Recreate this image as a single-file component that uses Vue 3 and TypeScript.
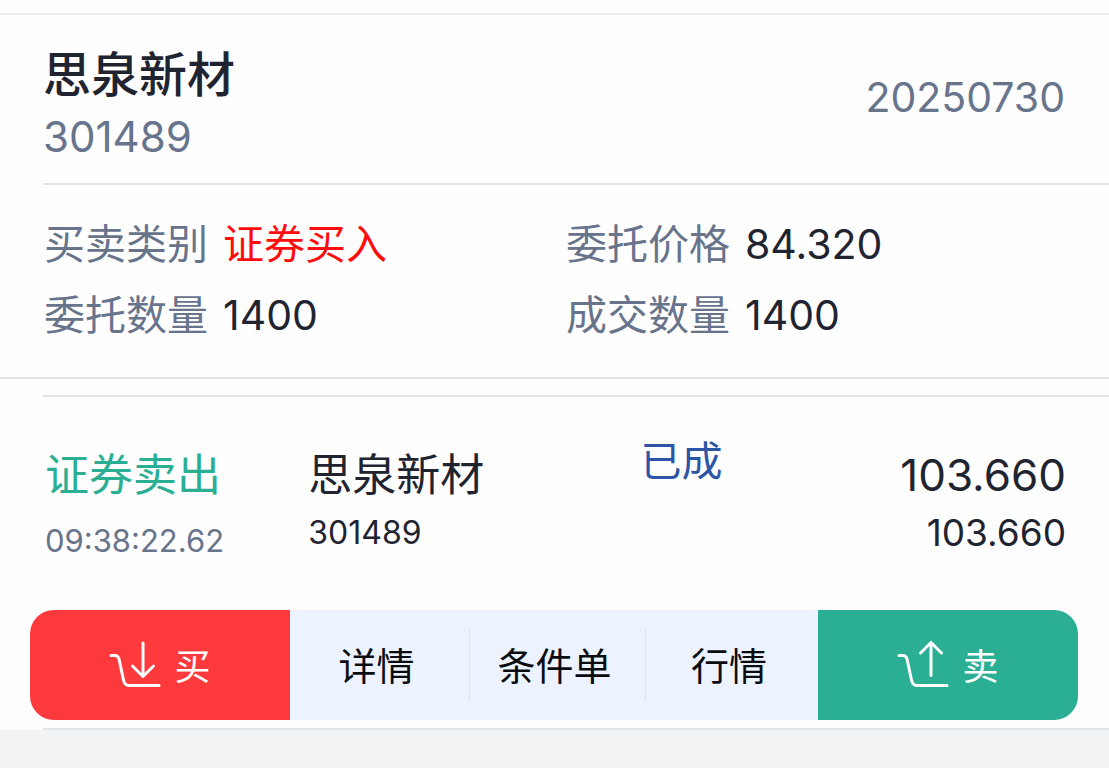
<script setup lang="ts">
interface Field {
  label: string
  value: string
  kind?: 'buy'
}

const fields: Field[] = [
  { label: '买卖类别', value: '证券买入', kind: 'buy' },
  { label: '委托价格', value: '84.320' },
  { label: '委托数量', value: '1400' },
  { label: '成交数量', value: '1400' },
]

const links: string[] = ['详情', '条件单', '行情']
</script>

<template>
  <main class="page">
    <section class="order">
      <header class="order-head">
        <div>
          <h1 class="stock-name">思泉新材</h1>
          <p class="stock-code">301489</p>
        </div>
        <time class="order-date" datetime="2025-07-30">20250730</time>
      </header>
      <dl class="fields">
        <div v-for="field in fields" :key="field.label" class="field">
          <dt>{{ field.label }}</dt>
          <dd :class="field.kind">{{ field.value }}</dd>
        </div>
      </dl>
    </section>

    <section class="deal">
      <div class="deal-row">
        <div class="cell">
          <div class="main-line sell-text">证券卖出</div>
          <div class="time">09:38:22.62</div>
        </div>
        <div class="cell">
          <div class="main-line">思泉新材</div>
          <div class="code">301489</div>
        </div>
        <div class="status">已成</div>
        <div class="cell prices">
          <div class="main-line">103.660</div>
          <div class="sub-price">103.660</div>
        </div>
      </div>

      <nav class="actions">
        <button type="button" class="trade buy-button">
          <svg class="icon" viewBox="0 0 52 48" aria-hidden="true">
            <path d="M2 14.500H6Q9 14.500 10 18L14.500 39Q15.500 44.500 20 44.500H50" />
            <path d="M34 2V35M23.500 25L34 35.500L44.500 25" />
          </svg>
          <span class="trade-label">买</span>
        </button>
        <div class="links">
          <button v-for="link in links" :key="link" type="button" class="link">{{ link }}</button>
        </div>
        <button type="button" class="trade sell-button">
          <svg class="icon" viewBox="0 0 52 48" aria-hidden="true">
            <path d="M2 14.500H6Q9 14.500 10 18L14.500 39Q15.500 44.500 20 44.500H50" />
            <path d="M34 34.500V2M23.500 12L34 1.500L44.500 12" />
          </svg>
          <span class="trade-label">卖</span>
        </button>
      </nav>
      <div class="end-line"></div>
    </section>
  </main>
</template>

<style>
body {
  margin: 0;
  background: #f2f3f5;
}
</style>

<style scoped>
.page {
  padding-top: 13px;
  background: #fefefe;
  color: #1f2430;
  font-family: Inter, "Noto Sans CJK SC", sans-serif;
  white-space: nowrap;
}

h1,
p,
dl,
dd {
  margin: 0;
}

.order {
  border-top: 2px solid #eeeeee;
  border-bottom: 2px solid #e5e5e5;
}

.order-head {
  display: flex;
  justify-content: space-between;
  align-items: center;
  margin-left: 43px;
  padding: 28px 44px 16px 0;
  border-bottom: 2px solid #e2e6e6;
}

.stock-name {
  font-size: 48px;
  font-weight: 500;
  line-height: 64px;
}

.stock-code,
.order-date {
  color: #68748c;
  line-height: 60px;
}

.stock-code {
  font-size: 42px;
}

.order-date {
  padding-bottom: 16px;
  font-size: 41px;
}

.fields {
  display: grid;
  grid-template-columns: 1fr 1fr;
  padding: 24px 21px 26px 44px;
}

.field {
  display: flex;
  gap: 15px;
  font-size: 41px;
  line-height: 71px;
}

.field dt {
  color: #68748c;
}

.field .buy {
  color: #fd0d0d;
}

.deal {
  padding-top: 16px;
}

.deal-row {
  display: grid;
  grid-template-columns: 263fr 332fr 200fr 225fr;
  align-items: start;
  margin-left: 43px;
  padding: 44px 43px 43px 2px;
  border-top: 2px solid #e5e5e5;
}

.main-line {
  padding-top: 2px;
  font-size: 44px;
  line-height: 64px;
}

.sell-text {
  color: #2aae94;
}

.time,
.code {
  line-height: 52px;
}

.code {
  font-size: 32px;
}

.time {
  padding-top: 8px;
  color: #68748c;
  font-size: 31px;
}

.status {
  color: #2c55a5;
  font-size: 41px;
  line-height: 40px;
}

.prices {
  text-align: right;
}

.sub-price {
  font-size: 37px;
  line-height: 52px;
}

.actions {
  display: flex;
  height: 110px;
  margin: 0 31px 8px 30px;
}

button {
  border: 0;
  margin: 0;
  padding: 0;
  font: inherit;
  cursor: pointer;
}

.trade {
  display: flex;
  flex: 260;
  align-items: center;
  justify-content: center;
  gap: 13px;
  color: #fefefe;
  font-size: 36px;
}

.trade-label {
  padding-bottom: 3px;
}

.buy-button {
  border-radius: 24px 0 0 24px;
  background: #ff3a3d;
}

.sell-button {
  border-radius: 0 24px 24px 0;
  background: #2aae94;
}

.icon {
  width: 52px;
  height: 48px;
  fill: none;
  stroke: currentColor;
  stroke-width: 3;
  stroke-linecap: round;
  stroke-linejoin: round;
}

.links {
  display: grid;
  flex: 528;
  grid-template-columns: 180fr 176fr 172fr;
  align-items: center;
  background: #ecf3fe;
}

.link {
  height: 72px;
  padding: 0 6px 3px 0;
  background: transparent;
  color: #0b0c0f;
  font-size: 38px;
}

.link:not(:last-child) {
  border-right: 1px solid #dde2ec;
}

.end-line {
  height: 2px;
  margin-left: 43px;
  background: #e1e4e9;
}
</style>
